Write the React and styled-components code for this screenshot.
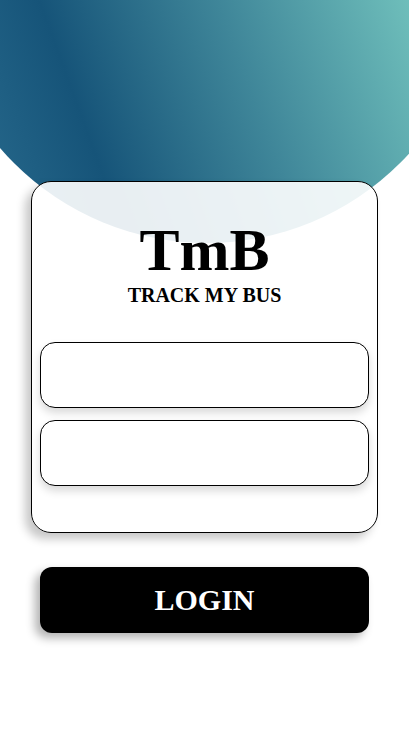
import React from "react";
import styled, { createGlobalStyle } from "styled-components";

const GlobalStyle = createGlobalStyle`
  html, body {
    margin: 0;
    padding: 0;
    background: #ffffff;
    font-family: "Liberation Serif", "Times New Roman", serif;
  }
`;

const Page = styled.div`
  position: relative;
  width: 100%;
  min-height: 732px;
  overflow: hidden;
  display: flex;
  flex-direction: column;
  align-items: center;
  padding-top: 181px;
  box-sizing: border-box;
`;

const Circle = styled.div`
  position: absolute;
  left: -66px;
  top: -303px;
  width: 546px;
  height: 546px;
  border-radius: 50%;
  background: linear-gradient(
    70deg,
    #2f7395 0%,
    #165479 26%,
    #3f8699 50%,
    #6fbfbb 76%,
    #8ad2c6 100%
  );
  z-index: 0;
`;

const Card = styled.div`
  position: relative;
  z-index: 1;
  width: 347px;
  box-sizing: border-box;
  border: 1px solid #000;
  border-radius: 20px;
  background: rgba(255, 255, 255, 0.9);
  box-shadow: -6px 6px 10px rgba(0, 0, 0, 0.22);
  padding: 38px 8px 46px;
  display: flex;
  flex-direction: column;
  align-items: stretch;
`;

const Logo = styled.h1`
  margin: 0;
  font-size: 60px;
  line-height: 1;
  font-weight: bold;
  text-align: center;
  color: #000;
`;

const Tagline = styled.h3`
  margin: 5px 0 37px;
  font-size: 20px;
  line-height: 1;
  font-weight: bold;
  text-align: center;
  color: #000;
`;

const Fields = styled.div`
  display: flex;
  flex-direction: column;
  gap: 12px;
`;

const Input = styled.input`
  height: 66px;
  box-sizing: border-box;
  border: 1px solid #000;
  border-radius: 15px;
  background: #fff;
  box-shadow: 0 5px 8px rgba(0, 0, 0, 0.15);
  padding: 0 16px;
  font-family: inherit;
  font-size: 18px;
  outline: none;
`;

const LoginButton = styled.button`
  position: relative;
  z-index: 1;
  margin-top: 34px;
  width: 329px;
  height: 66px;
  border: none;
  border-radius: 12px;
  background: #000;
  color: #fff;
  font-family: inherit;
  font-size: 30px;
  font-weight: bold;
  box-shadow: -5px 5px 10px rgba(0, 0, 0, 0.3);
  cursor: pointer;
`;

const App = () => {
  return (
    <>
      <GlobalStyle />
      <Page>
        <Circle />
        <Card>
          <Logo>TmB</Logo>
          <Tagline>TRACK MY BUS</Tagline>
          <Fields>
            <Input type="text" />
            <Input type="password" />
          </Fields>
        </Card>
        <LoginButton>LOGIN</LoginButton>
      </Page>
    </>
  );
};

export default App;
